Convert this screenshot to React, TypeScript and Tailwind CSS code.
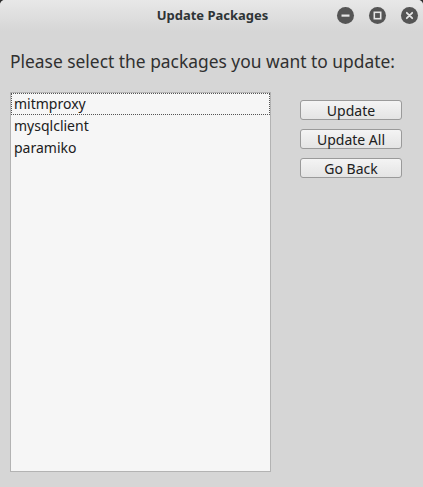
import { useState } from "react";

const packages = ["mitmproxy", "mysqlclient", "paramiko"];

function TitleButton({ kind }: { kind: "min" | "max" | "close" }) {
  return (
    <span className="w-[17px] h-[17px] rounded-full bg-[#555555] flex items-center justify-center">
      <svg width="17" height="17" viewBox="0 0 17 17">
        {kind === "min" && <rect x="4.5" y="7.5" width="8" height="2.2" fill="#e6e6e6" />}
        {kind === "max" && <rect x="5.3" y="5.3" width="6.4" height="6.4" fill="none" stroke="#e6e6e6" strokeWidth="1.6" />}
        {kind === "close" && (
          <path d="M5.8 5.8L11.2 11.2M11.2 5.8L5.8 11.2" stroke="#e6e6e6" strokeWidth="1.8" strokeLinecap="round" />
        )}
      </svg>
    </span>
  );
}

export default function App() {
  const [selected] = useState(0);

  return (
    <div className="w-[423px] h-[487px] bg-[#2d2d2d] font-['Noto_Sans',sans-serif]">
      <div className="w-full h-full rounded-t-[5px] overflow-hidden bg-[#d6d6d6] flex flex-col">
        {/* Title bar */}
        <div className="h-[31px] shrink-0 relative flex items-center justify-center bg-gradient-to-b from-[#e8e8e8] to-[#d6d6d6]">
          <span className="text-[13px] font-bold text-[#2e3436] pl-[2px]">Update Packages</span>
          <div className="absolute right-[5px] top-[7px] flex items-center gap-[15px]">
            <TitleButton kind="min" />
            <TitleButton kind="max" />
            <TitleButton kind="close" />
          </div>
        </div>

        <div className="px-[10px] pt-[19px]">
          <p className="text-[17.4px] leading-[22px] text-[#303030]">Please select the packages you want to update:</p>

          <div className="mt-[20px] flex items-start">
            <ul className="w-[261px] h-[380px] border border-[#b3b3b3] bg-[#f6f6f6] text-[14px] text-[#202020]">
              {packages.map((p, i) => (
                <li
                  key={p}
                  className={`h-[22px] leading-[19px] pl-[2px] ${i === selected ? "border border-dotted border-[#555]" : "border border-transparent"}`}
                >
                  {p}
                </li>
              ))}
            </ul>

            <div className="ml-[29px] pt-[8px] flex flex-col gap-[9px]">
              {["Update", "Update All", "Go Back"].map((b) => (
                <button
                  key={b}
                  className="w-[102px] h-[20px] rounded-[3px] border border-[#9a9a9a] bg-gradient-to-b from-[#f4f4f4] to-[#e4e4e4] text-[14px] leading-[17px] text-[#202020]"
                >
                  {b}
                </button>
              ))}
            </div>
          </div>
        </div>
      </div>
    </div>
  );
}
